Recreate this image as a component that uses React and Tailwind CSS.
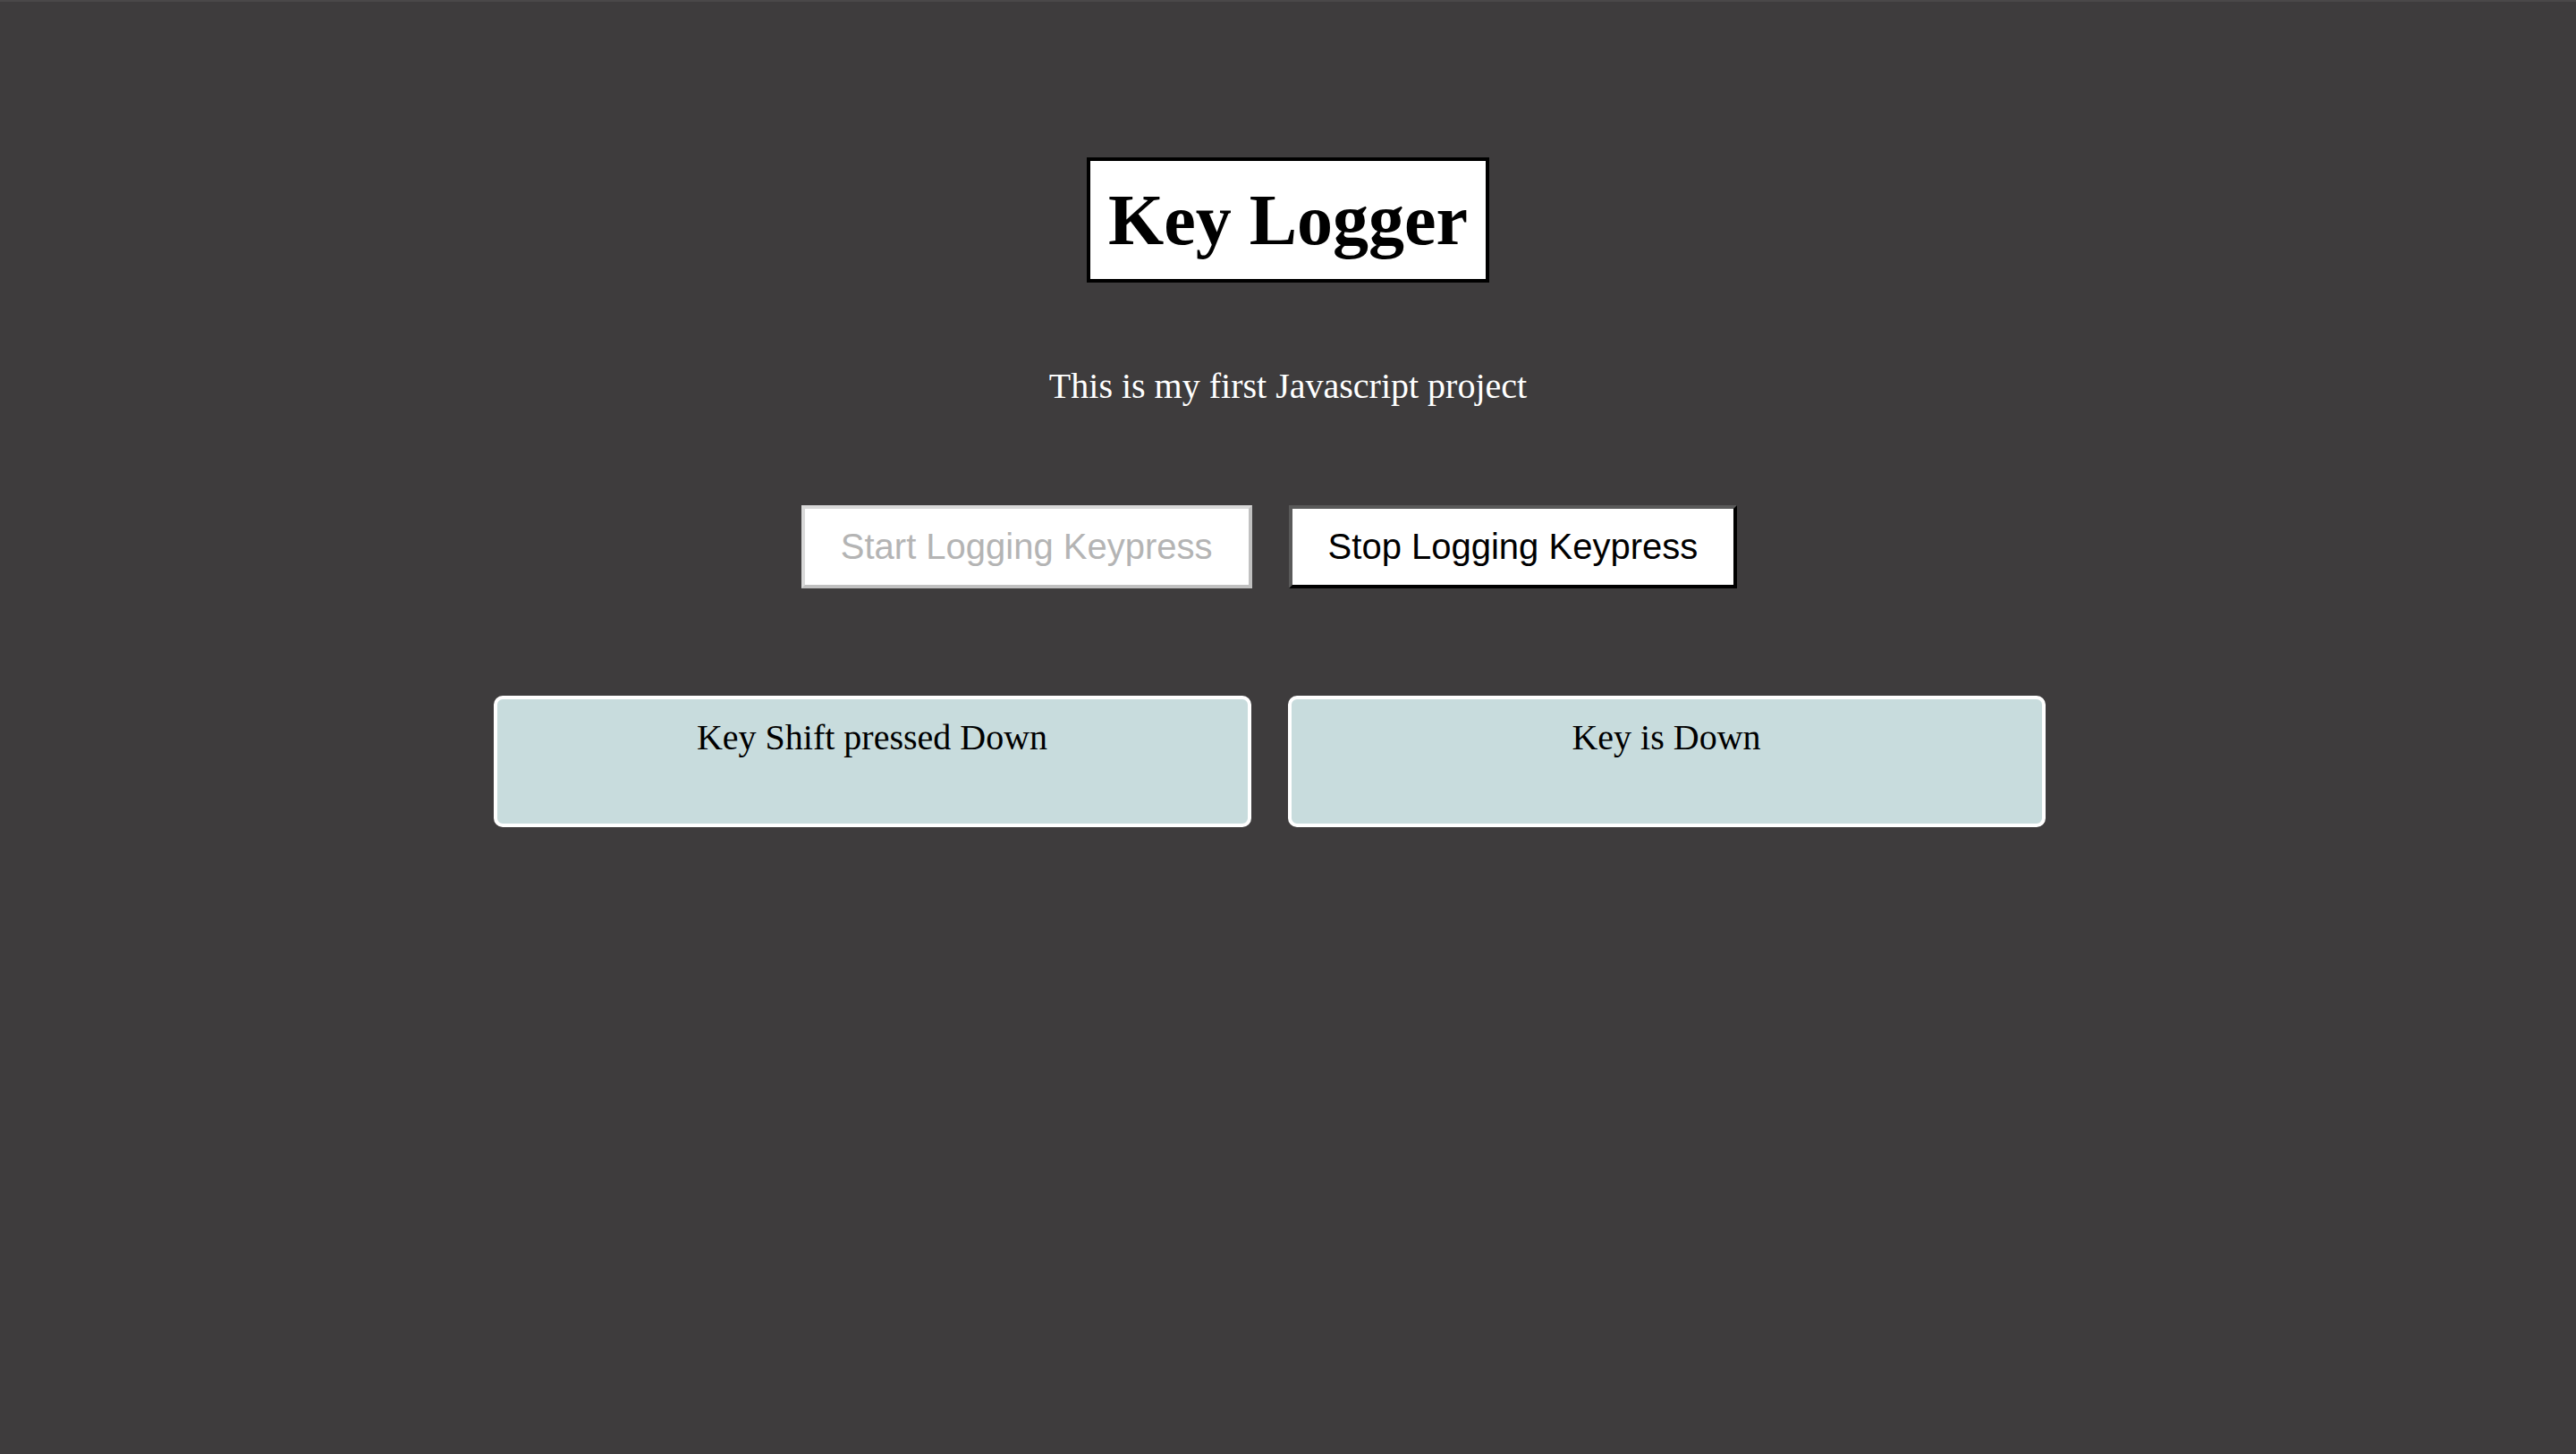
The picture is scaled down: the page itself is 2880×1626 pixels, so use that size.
const serif = 'font-["Liberation_Serif","Times_New_Roman",serif]';
const sans = 'font-["Liberation_Sans",Arial,sans-serif]';

const logs = ['Key Shift pressed Down', 'Key is Down'];

export default function App() {
  return (
    <div className={`min-h-screen border-t-2 border-[#4a4849] bg-[#3e3c3d] ${serif} flex flex-col items-center`}>
      <h1 className="mt-[174px] border-4 border-black bg-white px-5 py-5 text-[80px] font-bold leading-[92px] text-black">
        Key Logger
      </h1>

      <p className="mt-[93px] text-[40px] leading-[46px] text-white">This is my first Javascript project</p>

      <div className="mt-[110px] flex gap-[41px] pr-[42px]">
        <button
          disabled
          className={`${sans} border-4 border-t-[#d9d9d9] border-l-[#d9d9d9] border-b-[#c0c0c0] border-r-[#c0c0c0] bg-white px-10 py-5 text-[40px] leading-[45px] text-[#b4b4b4]`}
        >
          Start Logging Keypress
        </button>
        <button
          className={`${sans} border-4 border-t-[#5a5a5a] border-l-[#5a5a5a] border-b-black border-r-black bg-white px-10 py-5 text-[40px] leading-[45px] text-black`}
        >
          Stop Logging Keypress
        </button>
      </div>

      <div className="mt-[120px] flex gap-[41px] pr-[42px]">
        {logs.map((text) => (
          <div
            key={text}
            className="h-[147px] w-[847px] rounded-[10px] border-4 border-white bg-[#c8dcdd] pt-[21px] text-center text-[40px] leading-[44px] text-black"
          >
            {text}
          </div>
        ))}
      </div>
    </div>
  );
}
